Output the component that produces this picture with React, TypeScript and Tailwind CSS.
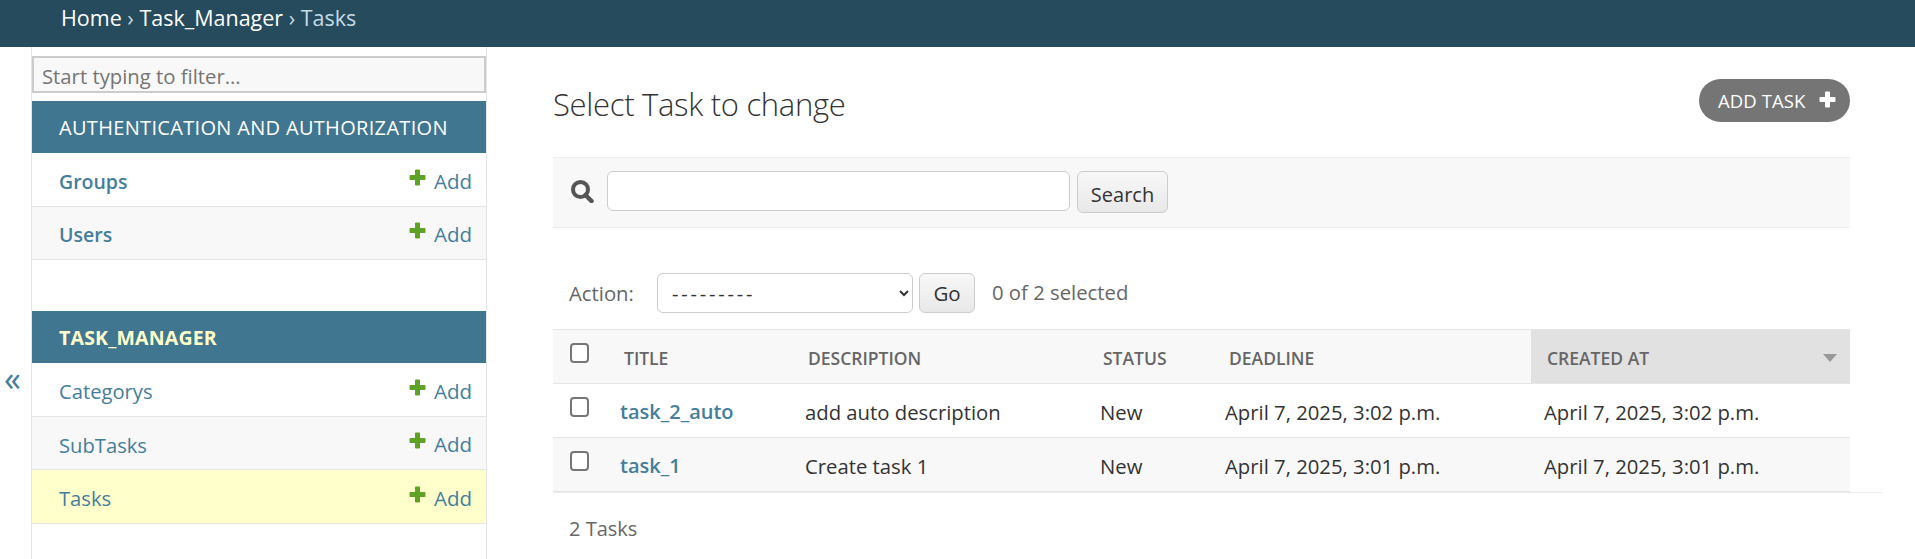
import React from 'react'

const font = 'font-["Open_Sans",sans-serif]'

function PlusIcon({ className }: { className: string }) {
  return (
    <svg viewBox="0 0 17 17" className={className} fill="currentColor">
      <path d="M6 1.5q0-1 1-1h3q1 0 1 1V6h4.5q1 0 1 1v3q0 1-1 1H11v4.5q0 1-1 1H7q-1 0-1-1V11H1.5q-1 0-1-1V7q0-1 1-1H6z" />
    </svg>
  )
}

function SearchIcon() {
  return (
    <svg viewBox="0 0 24 24" className="w-[24px] h-[24px] text-[#555] shrink-0" fill="none" stroke="currentColor">
      <circle cx="10.5" cy="10.5" r="7.5" strokeWidth="4" />
      <path d="M15.5 16l6 6" strokeWidth="4.5" strokeLinecap="round" />
    </svg>
  )
}

function ModelRow({ name, alt, current }: { name: string; alt?: boolean; current?: boolean }) {
  const strong = name === 'Groups' || name === 'Users'
  return (
    <div
      className={`flex items-center justify-between h-[53.5px] pt-[4px] pl-[27px] pr-[14px] border-b border-[#e5e5e5] ${
        current ? 'bg-[#ffffcc]' : alt ? 'bg-[#f8f8f8]' : 'bg-white'
      }`}
    >
      <a className={`text-[#447e9b] ${strong ? 'text-[19.5px] font-semibold' : 'text-[20.2px]'}`}>{name}</a>
      <a className="flex items-center text-[20.5px] text-[#447e9b]">
        <PlusIcon className="w-[17px] h-[17px] text-[#5fa225] mr-[8px] -mt-[8px]" />
        Add
      </a>
    </div>
  )
}

function Caption({ title, current }: { title: string; current?: boolean }) {
  return (
    <div className={`flex items-center h-[52px] pt-[2px] pl-[27px] bg-[#417690] ${current ? 'text-[19.5px] tracking-[0.2px] text-[#ffffcc] font-bold' : 'text-[20px] tracking-[0.32px] text-white'}`}>
      {title}
    </div>
  )
}

function Checkbox() {
  return <input type="checkbox" className="appearance-none block w-[19px] h-[20px] bg-white border-2 border-[#767676] rounded-[4px] -mt-[7px]" />
}

const rows = [
  { title: 'task_2_auto', description: 'add auto description', status: 'New', deadline: 'April 7, 2025, 3:02 p.m.', created: 'April 7, 2025, 3:02 p.m.' },
  { title: 'task_1', description: 'Create task 1', status: 'New', deadline: 'April 7, 2025, 3:01 p.m.', created: 'April 7, 2025, 3:01 p.m.' },
]

export default function App() {
  return (
    <div className={`${font} h-[559px] overflow-hidden bg-white text-[#333]`}>
      <div className="h-[47px] pl-[61px] bg-[#264b5d] text-[21.5px] leading-[35px] text-white">
        Home <span className="text-[#c4dce8]">›</span> Task_Manager <span className="text-[#c4dce8]">›</span> <span className="text-[#c4dce8]">Tasks</span>
      </div>

      <div className="flex">
        <div className="w-[31px] shrink-0 pt-[311px] pl-[4px] text-[34px] leading-[40px] text-[#447e9b]">«</div>

        <aside className="w-[456px] h-[512px] shrink-0 border-x border-[#e5e5e5] pt-[9px]">
          <input
            placeholder="Start typing to filter..."
            className="block w-full h-[37px] px-[8px] pt-[2px] mb-[8px] bg-[#f8f8f8] border-2 border-[#ccc] text-[20.3px] placeholder:text-[#757575]"
          />
          <Caption title="AUTHENTICATION AND AUTHORIZATION" />
          <ModelRow name="Groups" />
          <ModelRow name="Users" alt />
          <div className="h-[51px]" />
          <Caption title="TASK_MANAGER" current />
          <ModelRow name="Categorys" />
          <ModelRow name="SubTasks" alt />
          <ModelRow name="Tasks" current />
        </aside>

        <main className="flex-1 min-w-0 pl-[66px] pr-[65px] pt-[32px]">
          <div className="flex items-center justify-between h-[43px]">
            <h1 className="mt-[7px] text-[31px] font-light tracking-[-0.3px] text-[#333]">Select Task to change</h1>
            <a className="flex items-center justify-between w-[151px] h-[43px] pl-[19px] pr-[14px] rounded-full bg-[#757575] text-white text-[18.5px] tracking-[0.1px]">
              ADD TASK
              <PlusIcon className="w-[17px] h-[17px] -mt-[2px]" />
            </a>
          </div>

          <div className="flex items-start h-[71px] mt-[35px] pt-[13px] pl-[17px] bg-[#f8f8f8] border-y border-[#eee]">
            <div className="h-[40px] flex items-center"><SearchIcon /></div>
            <input className="w-[463px] h-[40px] ml-[13px] bg-white border border-[#ccc] rounded-[6px]" />
            <button className="w-[91px] h-[42px] ml-[7px] pt-[5px] border border-[#ccc] rounded-[6px] bg-gradient-to-b from-[#f8f8f8] to-[#e8e8e8] text-[20px] text-[#333]">Search</button>
          </div>

          <div className="flex items-center h-[40px] mt-[45px] pl-[16px] text-[20.3px] text-[#666]">
            <span className="w-[88px]">Action:</span>
            <select className="w-[256px] h-[40px] pl-[10px] bg-white border border-[#ccc] rounded-[6px] text-[20px] tracking-[2.8px] text-[#333]">
              <option>---------</option>
            </select>
            <button className="w-[56px] h-[40px] ml-[6px] border border-[#ccc] rounded-[6px] bg-gradient-to-b from-[#f8f8f8] to-[#e8e8e8] text-[20.5px] text-[#333]">Go</button>
            <span className="ml-[17px] -mt-[2px]">0 of 2 selected</span>
          </div>

          <table className="table-fixed w-[1297px] mt-[16px] border-collapse">
            <colgroup>
              <col className="w-[55px]" />
              <col className="w-[184px]" />
              <col className="w-[295px]" />
              <col className="w-[126px]" />
              <col className="w-[318px]" />
              <col className="w-[319px]" />
            </colgroup>
            <thead>
              <tr className="h-[54px] bg-[#f8f8f8] border-t border-b border-[#e5e5e5] text-left text-[17.5px] font-semibold text-[#666]">
                <th className="pl-[17px]"><Checkbox /></th>
                <th className="pl-[16px] pt-[3px] font-semibold">TITLE</th>
                <th className="pl-[16px] pt-[3px] font-semibold">DESCRIPTION</th>
                <th className="pl-[16px] pt-[3px] font-semibold">STATUS</th>
                <th className="pl-[16px] pt-[3px] font-semibold">DEADLINE</th>
                <th className="pl-[16px] pr-[13px] pt-[3px] font-semibold bg-[#e1e1e1]">
                  <div className="flex items-center justify-between">
                    CREATED AT
                    <svg viewBox="0 0 14 8" className="w-[14px] h-[8px] text-[#999]" fill="currentColor"><path d="M0 0h14L7 8z" /></svg>
                  </div>
                </th>
              </tr>
            </thead>
            <tbody className="text-[20.3px] text-[#333]">
              {rows.map((row, i) => (
                <tr key={row.title} className={`h-[54px] border-b border-[#e5e5e5] ${i % 2 ? 'bg-[#f8f8f8]' : 'bg-white'}`}>
                  <td className="pl-[17px]"><Checkbox /></td>
                  <th className="pl-[12px] pt-[3px] text-left text-[20px] font-semibold text-[#447e9b]"><a>{row.title}</a></th>
                  <td className="pl-[13px] pt-[3px]">{row.description}</td>
                  <td className="pl-[13px] pt-[3px]">{row.status}</td>
                  <td className="pl-[12px] pt-[3px]">{row.deadline}</td>
                  <td className="pl-[13px] pt-[3px]">{row.created}</td>
                </tr>
              ))}
            </tbody>
          </table>
          <div className="w-[1330px] border-t border-[#eee]" />
          <div className="pl-[16px] pt-[21px] text-[20px] text-[#666]">2 Tasks</div>
        </main>
      </div>
    </div>
  )
}
